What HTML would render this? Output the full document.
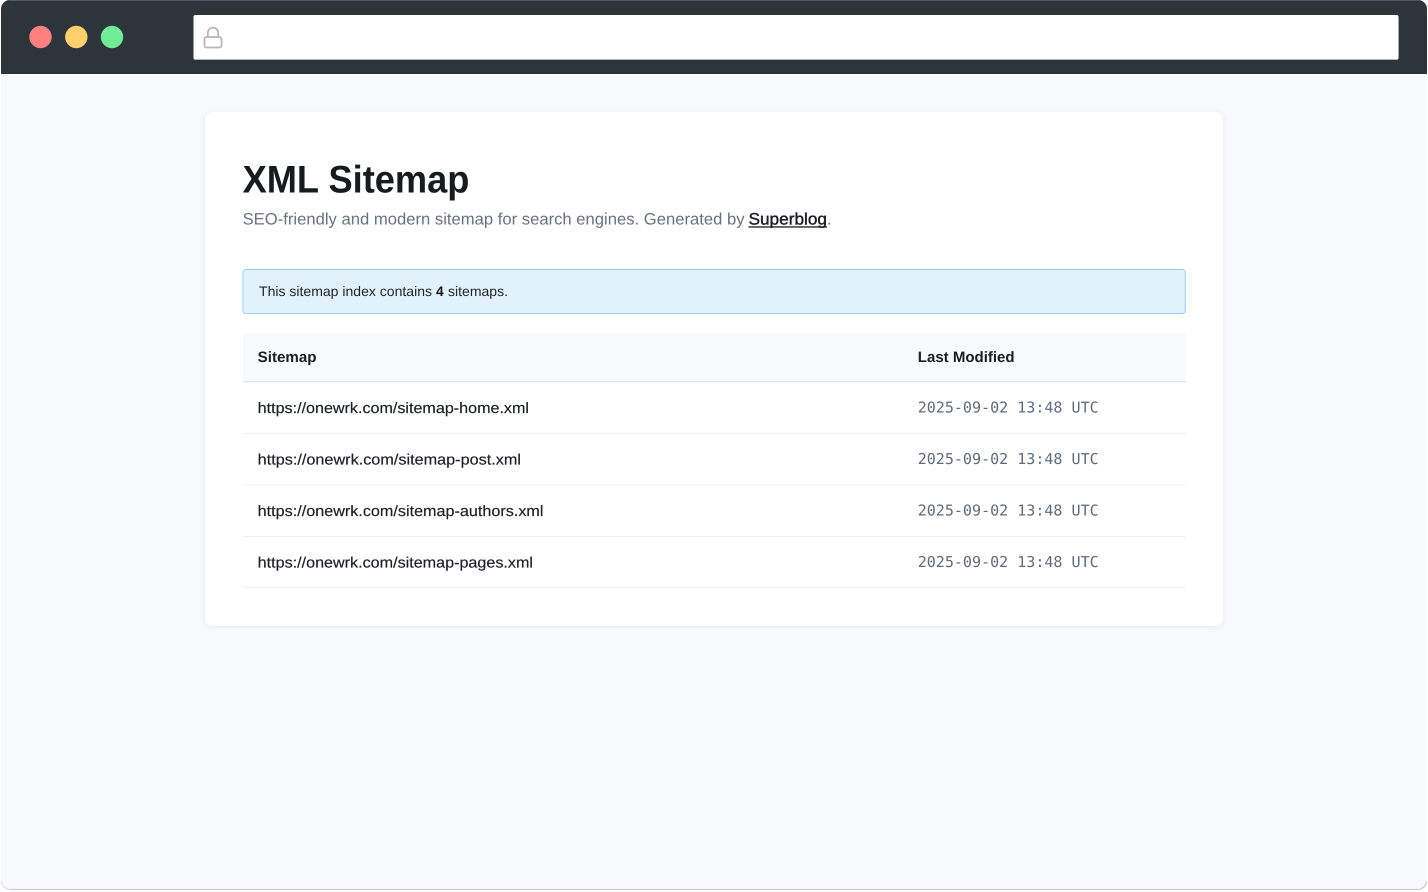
<!DOCTYPE html>
<html lang="en">
<head>
<meta charset="utf-8">
<title>XML Sitemap</title>
<style>
html,body{margin:0;padding:0;width:1428px;height:892px;overflow:hidden;background:#fff}
svg{display:block;position:absolute;left:0;top:0}
text{font-family:"Liberation Sans",sans-serif;text-rendering:geometricPrecision}
.m{font-family:"DejaVu Sans Mono",monospace;font-size:15px;fill:#5f6b7a}
.u{font-size:15px;fill:#1f2328;font-weight:400;stroke:#1f2328;stroke-width:.2px}
.h{font-size:15px;fill:#1a1d21;font-weight:700}
</style>
</head>
<body>
<svg width="1428" height="892" viewBox="0 0 1428 892" xmlns="http://www.w3.org/2000/svg">
<defs>
<filter id="s" x="-5%" y="-5%" width="110%" height="110%">
<feDropShadow dx="0" dy="1" stdDeviation="3" flood-color="#000" flood-opacity=".07"/>
</filter>
<filter id="b" x="-2%" y="-5%" width="104%" height="110%"><feGaussianBlur stdDeviation=".35"/></filter>
</defs>

<rect x="1" y="0" width="1426" height="890" rx="9" fill="#f7f9fb"/>
<path d="M10 889.5H1418a9 9 0 0 0 8.500-8" fill="none" stroke="#c9cbcd" stroke-width="1.200"/>
<path d="M1.500 881a9 9 0 0 0 8.500 8.500" fill="none" stroke="#dadcde" stroke-width="1"/>
<path d="M1 74V9a9 9 0 0 1 9-9H1418a9 9 0 0 1 9 9V74Z" fill="#2d353a"/>
<path d="M9 .5H1419" stroke="#50585c" stroke-width="1"/>

<circle cx="40.500" cy="37" r="11.200" fill="#ff8080"/>
<circle cx="76.300" cy="37" r="11.200" fill="#ffce6d"/>
<circle cx="112" cy="37" r="11.200" fill="#70ec98"/>

<rect x="193.500" y="15" width="1205" height="44.700" rx="2" fill="#fff"/>
<path d="M194 59.500H1397M1398.500 17V58" stroke="#a9adaf" stroke-width=".8" fill="none"/>
<rect x="204.500" y="37" width="17" height="10.500" rx="2" fill="none" stroke="#b8b8b8" stroke-width="1.800"/>
<path d="M207.800 37V32.800a5.200 5.200 0 0 1 10.400 0V37" fill="none" stroke="#b8b8b8" stroke-width="1.800"/>

<rect x="205" y="112" width="1018" height="514" rx="8" fill="#fff" filter="url(#s)"/>

<rect x="243" y="269.500" width="942.300" height="44" rx="3" fill="#e2f2fc" stroke="#97d0f6" stroke-width="1"/>

<rect x="243" y="333" width="943" height="48" fill="#f8f9fb"/>
<rect x="243" y="381" width="943" height="1.500" fill="#e2e8ef"/>
<rect x="243" y="433" width="943" height="1" fill="#edf1f5"/>
<rect x="243" y="484.500" width="943" height="1" fill="#edf1f5"/>
<rect x="243" y="536" width="943" height="1" fill="#edf1f5"/>
<rect x="243" y="587" width="943" height="1" fill="#edf1f5"/>

<g filter="url(#b)">
<text x="242.600" y="192.300" font-size="38.500" font-weight="700" fill="#181b1f" textLength="226.800" lengthAdjust="spacingAndGlyphs">XML Sitemap</text>
<text x="242.600" y="224.500" font-size="16.500" fill="#69727f" textLength="502" lengthAdjust="spacingAndGlyphs">SEO-friendly and modern sitemap for search engines. Generated by</text>
<text x="748.500" y="224.500" font-size="16.500" fill="#1a1d21" stroke="#1a1d21" stroke-width=".4" textLength="78.500" lengthAdjust="spacingAndGlyphs">Superblog</text>
<rect x="748.500" y="226.300" width="78.500" height="1.300" fill="#1a1d21"/>
<text x="827" y="224.500" font-size="16.500" fill="#69727f">.</text>

<text x="259" y="296" font-size="13.800" fill="#23272c" textLength="173" lengthAdjust="spacingAndGlyphs">This sitemap index contains</text>
<text x="436" y="296" font-size="13.800" font-weight="700" fill="#15181b">4</text>
<text x="448" y="296" font-size="13.800" fill="#23272c" textLength="60" lengthAdjust="spacingAndGlyphs">sitemaps.</text>

<text class="h" x="257.700" y="362" textLength="58.800" lengthAdjust="spacingAndGlyphs">Sitemap</text>
<text class="h" x="917.800" y="362" textLength="96.800" lengthAdjust="spacingAndGlyphs">Last Modified</text>

<text class="u" x="257.700" y="413" textLength="271.300" lengthAdjust="spacingAndGlyphs">https://onewrk.com/sitemap-home.xml</text>
<text class="u" x="257.700" y="464.500" textLength="263.300" lengthAdjust="spacingAndGlyphs">https://onewrk.com/sitemap-post.xml</text>
<text class="u" x="257.700" y="516" textLength="285.800" lengthAdjust="spacingAndGlyphs">https://onewrk.com/sitemap-authors.xml</text>
<text class="u" x="257.700" y="567.500" textLength="275.300" lengthAdjust="spacingAndGlyphs">https://onewrk.com/sitemap-pages.xml</text>

<text class="m" x="917.700" y="412.700" textLength="181" lengthAdjust="spacingAndGlyphs">2025-09-02 13:48 UTC</text>
<text class="m" x="917.700" y="464" textLength="181" lengthAdjust="spacingAndGlyphs">2025-09-02 13:48 UTC</text>
<text class="m" x="917.700" y="515.500" textLength="181" lengthAdjust="spacingAndGlyphs">2025-09-02 13:48 UTC</text>
<text class="m" x="917.700" y="567" textLength="181" lengthAdjust="spacingAndGlyphs">2025-09-02 13:48 UTC</text>
</g>
</svg>
</body>
</html>
